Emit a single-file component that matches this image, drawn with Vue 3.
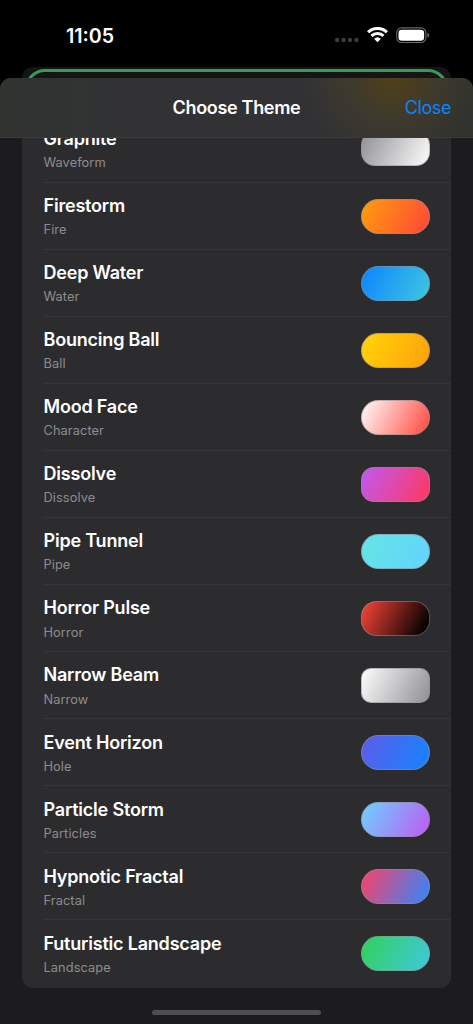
<script setup>
const themes = [
  { name: 'Graphite', kind: 'Waveform', from: '#8e8e93', to: '#ffffff', radius: 14 },
  { name: 'Firestorm', kind: 'Fire', from: '#ff9f0a', to: '#ff453a', radius: 17.5 },
  { name: 'Deep Water', kind: 'Water', from: '#0a84ff', to: '#40c8e0', radius: 17.5 },
  { name: 'Bouncing Ball', kind: 'Ball', from: '#ffd60a', to: '#ff9f0a', radius: 17.5 },
  { name: 'Mood Face', kind: 'Character', from: '#ffffff', to: '#ff453a', radius: 17.5 },
  { name: 'Dissolve', kind: 'Dissolve', from: '#bf5af2', to: '#ff375f', radius: 13 },
  { name: 'Pipe Tunnel', kind: 'Pipe', from: '#63e6e2', to: '#64d2ff', radius: 17.5 },
  { name: 'Horror Pulse', kind: 'Horror', from: '#ff453a', to: '#000000 92%', radius: 15.5 },
  { name: 'Narrow Beam', kind: 'Narrow', from: '#ffffff', to: '#8e8e93', radius: 10 },
  { name: 'Event Horizon', kind: 'Hole', from: '#5e5ce6', to: '#1485ff', radius: 17.5 },
  { name: 'Particle Storm', kind: 'Particles', from: '#6cd2ff', to: '#bf5af2', radius: 17.5 },
  { name: 'Hypnotic Fractal', kind: 'Fractal', from: '#ff4064', to: '#2c88ff', radius: 17.5 },
  { name: 'Futuristic Landscape', kind: 'Landscape', from: '#30d158', to: '#40c8e0', radius: 17.5 },
]
const swatch = (t) => ({
  backgroundImage: `linear-gradient(116.7deg, ${t.from}, ${t.to})`,
  borderRadius: `${t.radius}px`,
})
</script>

<template>
  <div class="screen">
    <div class="status">
      <span class="time">11:05</span>
      <div class="indicators">
        <svg class="dots" width="24" height="6" viewBox="0 0 24 6">
          <circle v-for="n in 4" :key="n" :cx="n * 6.4 - 4.2" cy="3" r="2.2" fill="#3c3c3d" />
        </svg>
        <svg class="wifi" width="21" height="16" viewBox="0 0 21 16">
          <g fill="none" stroke="#fff" stroke-width="3">
            <path d="M1.1 5.3A13.3 13.3 0 0 1 19.9 5.3" />
            <path d="M4.5 8.9A8.5 8.5 0 0 1 16.5 8.9" />
          </g>
          <path d="M7.1 11.8A5 5 0 0 1 13.9 11.8L10.5 15.2Z" fill="#fff" />
        </svg>
        <svg class="battery" width="34" height="17" viewBox="0 0 34 17">
          <rect x="0.7" y="0.9" width="29.2" height="14.6" rx="4.8" fill="none" stroke="#69696a" stroke-width="1.1" />
          <rect x="2.5" y="2.7" width="25.6" height="11" rx="3.3" fill="#fff" />
          <path d="M31.3 5.8Q33.2 6.4 33.2 8.2T31.3 10.7Z" fill="#69696a" />
        </svg>
      </div>
    </div>
    <div class="behind"><div class="outline"></div></div>
    <main class="sheet">
      <header class="bar">
        <h1>Choose Theme</h1>
        <button class="close">Close</button>
      </header>
      <div class="viewport">
        <ul class="list">
          <li v-for="t in themes" :key="t.name" class="row">
            <div class="labels">
              <span class="name">{{ t.name }}</span>
              <span class="kind">{{ t.kind }}</span>
            </div>
            <span class="swatch" :style="swatch(t)"></span>
          </li>
        </ul>
      </div>
      <div class="home"></div>
    </main>
  </div>
</template>

<style>
body { background: #000; }
</style>

<style scoped>
.screen {
  width: 473px;
  height: 1024px;
  overflow: hidden;
  background: #000;
  color: #fff;
  font-family: Inter, "Liberation Sans", sans-serif;
  display: flex;
  flex-direction: column;
}
.status {
  flex: none;
  height: 67px;
  box-sizing: border-box;
  padding: 24px 43px 0 66px;
  display: flex;
  justify-content: space-between;
  align-items: flex-start;
}
.time { margin-top: 1px; font-size: 19.6px; line-height: 23px; font-weight: 600; }
.indicators { display: flex; align-items: flex-start; }
.dots { margin: 13px 8px 0 0; }
.wifi { margin: 2.5px 8px 0 0; }
.battery { margin-top: 2.5px; }
.behind {
  flex: none;
  height: 11px;
  margin: 0 22px;
  overflow: hidden;
  background: #151516;
  border-radius: 11px 11px 0 0;
}
.outline {
  box-sizing: border-box;
  height: 60px;
  margin: 2px 3px 0;
  border: 3px solid #369c55;
  border-radius: 20px;
}
.sheet {
  flex: none;
  height: 946px;
  background: #1c1c1e;
  border-radius: 11px 11px 0 0;
  overflow: hidden;
  display: flex;
  flex-direction: column;
}
.bar {
  flex: none;
  box-sizing: border-box;
  height: 60px;
  padding: 0 22px;
  border-bottom: 1px solid #3c3b3b;
  background:
    radial-gradient(ellipse 88px 84px at 393px 0, rgba(88, 66, 18, 0.8), rgba(80, 68, 38, 0.42) 50%, transparent),
    linear-gradient(90deg, #303330, #323234 25%, #323234 78%, #30322e);
  display: grid;
  grid-template-columns: 1fr auto 1fr;
  align-items: center;
}
h1 { grid-column: 2; margin: 0; font-size: 18px; line-height: 22px; font-weight: 560; letter-spacing: -0.32px; }
.close {
  justify-self: end;
  padding: 0;
  border: 0;
  background: none;
  color: #0a84ff;
  font: 400 18px/22px Inter, sans-serif;
  letter-spacing: -0.4px;
}
.viewport {
  flex: none;
  height: 849.5px;
  overflow: hidden;
  display: flex;
  flex-direction: column;
  justify-content: flex-end;
  margin: 0 22px;
  border-radius: 0 0 11px 11px;
  background: #2c2c2e;
}
.list { list-style: none; margin: 0; padding: 0 0 0 21px; }
.row {
  height: 67.08px;
  box-sizing: border-box;
  padding: 0 21px 0 0.5px;
  display: flex;
  align-items: center;
  justify-content: space-between;
  border-bottom: 1px solid #363638;
}
.row:last-child { border-bottom-color: transparent; }
.labels { display: flex; flex-direction: column; gap: 4.2px; padding-top: 1.8px; }
.name { font-size: 18px; line-height: 23px; font-weight: 560; letter-spacing: -0.2px; }
.kind { font-size: 12.8px; line-height: 18px; color: #8c8c90; letter-spacing: 0.08px; }
.swatch {
  width: 69.5px;
  height: 35px;
  margin-top: 0.8px;
  box-sizing: border-box;
  border: 1px solid rgba(142, 142, 147, 0.55);
  background-origin: border-box;
}
.home {
  width: 169px;
  height: 5px;
  margin: 22.5px auto 0;
  border-radius: 3px;
  background: #4e4e50;
}
</style>
